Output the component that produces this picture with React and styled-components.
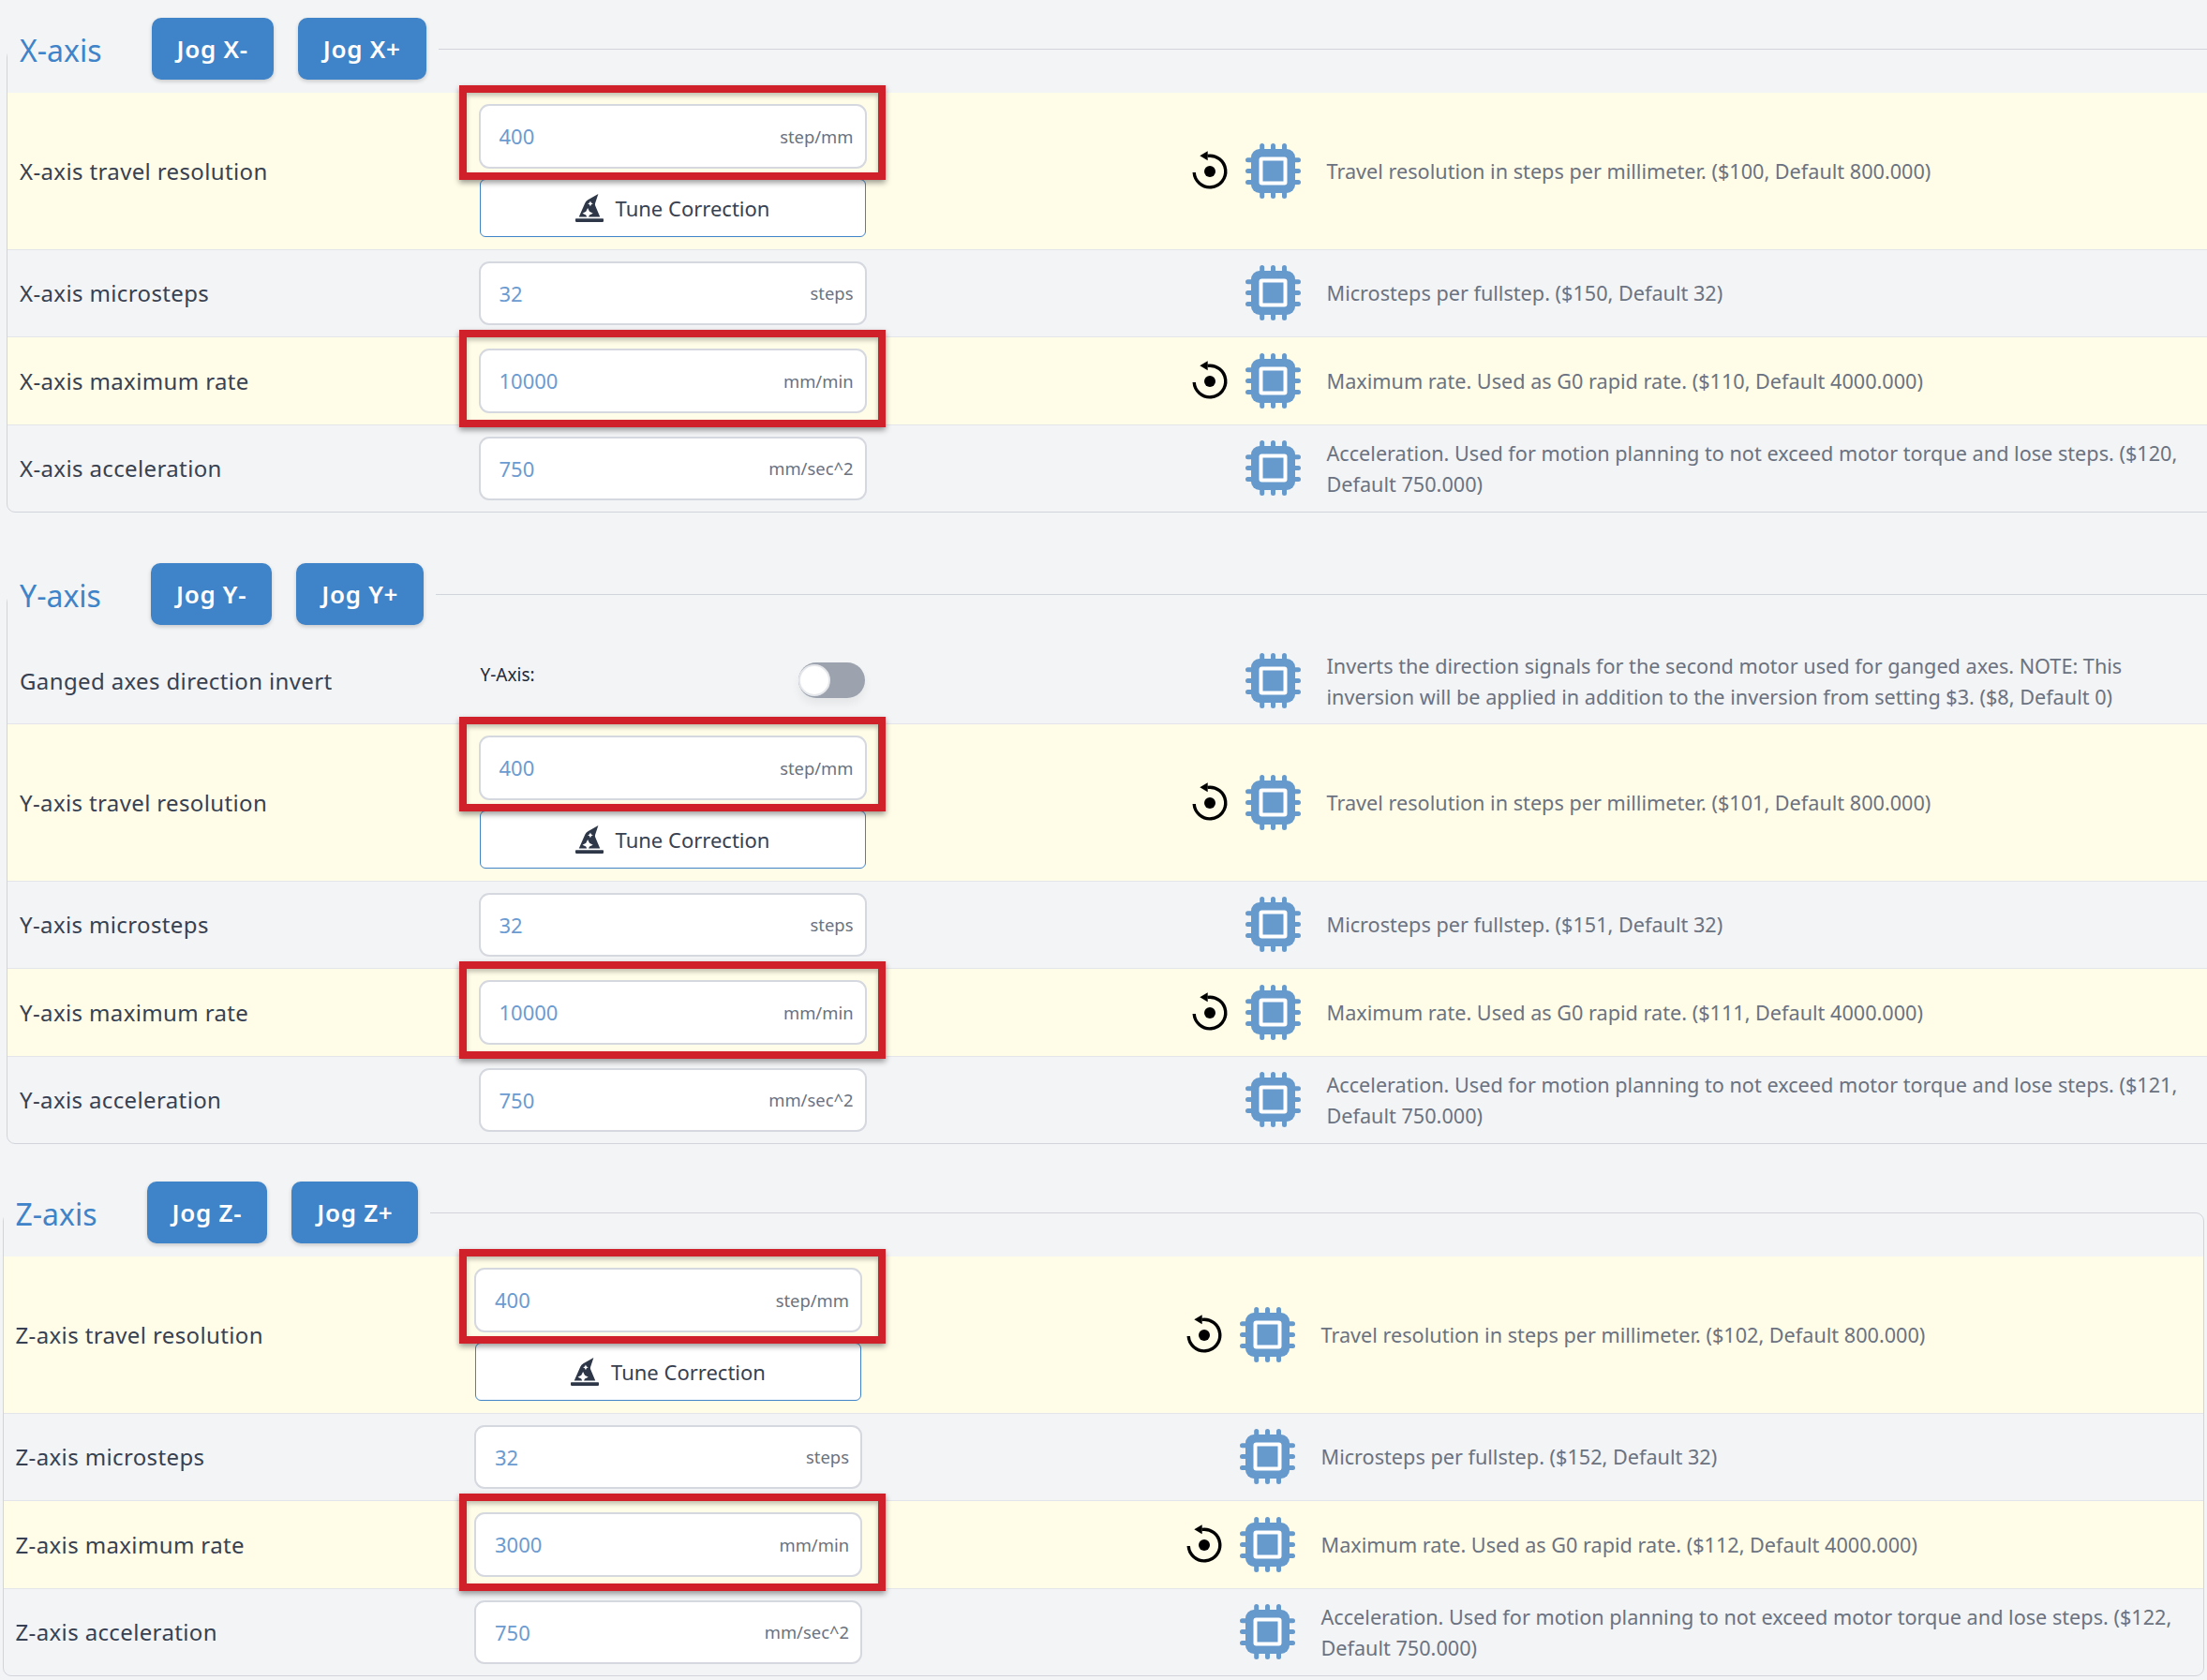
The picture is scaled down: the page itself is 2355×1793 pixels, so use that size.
import styled, { createGlobalStyle } from 'styled-components';
import { FaHatWizard } from 'react-icons/fa';

const GlobalStyle = createGlobalStyle`
  html, body {
    margin: 0;
    padding: 0;
    background: #f3f4f6;
  }
  body {
    font-family: "Noto Sans", "Open Sans", sans-serif;
    color: #374151;
  }
`;

const Page = styled.div`
  height: 1793px;
  padding-top: 19px;
  box-sizing: border-box;
  overflow: hidden;
`;

const Section = styled.fieldset`
  box-sizing: border-box;
  min-width: 0;
  padding: 0;
  border: 1.5px solid #d1d5db;
  border-radius: 9px;
  margin: 0 ${p => (p.$inset ? '3px' : '-20px')} ${p => p.$gap}px ${p => (p.$inset ? '2.5px' : '7px')};
`;

const Legend = styled.legend`
  display: flex;
  align-items: center;
  height: 66px;
  padding: 0 13px;
  margin: 0;
`;

const Title = styled.span`
  font-size: 32px;
  line-height: 70px;
  height: 66px;
  color: #3f83c8;
  margin-right: 53px;
`;

const JogButton = styled.button`
  height: 66px;
  padding: 0 27px;
  margin-right: 26px;
  border: 0;
  border-radius: 10px;
  background: #3f83c8;
  color: #fff;
  font: 600 26px "Noto Sans", sans-serif;
  letter-spacing: 0.7px;
  box-shadow: 0 2px 4px rgba(0, 0, 0, 0.18);
  &:last-child {
    margin-right: 0;
  }
`;

const Body = styled.div`
  padding-top: 14px;
`;

const Row = styled.div`
  display: grid;
  grid-template-columns: 502.5px 414px ${p => (p.$inset ? '489.5px' : '491px')} 934px;
  align-items: center;
  padding: ${p => (p.$compact ? '11.5px 0 11px' : '12px 0')};
  background: ${p => (p.$highlight ? '#fffde8' : 'transparent')};
  border-bottom: 1px solid #e3e5ea;
  &:last-child {
    border-bottom: 0;
  }
`;

const Label = styled.div`
  padding-left: 13px;
  font-size: 24px;
  letter-spacing: 0.37px;
`;

const Control = styled.div`
  position: relative;
  display: flex;
  flex-direction: column;
`;

const InputBox = styled.div`
  display: flex;
  align-items: center;
  justify-content: space-between;
  box-sizing: border-box;
  height: 68.5px;
  padding: 0 12px 0 20px;
  background: #fff;
  border: 2px solid #d5d8df;
  border-radius: 11px;
`;

const Value = styled.span`
  font-size: 22px;
  color: #6b9bd0;
`;

const Unit = styled.span`
  font-size: 18.4px;
  color: #6b7280;
`;

const Marker = styled.div`
  position: absolute;
  z-index: 2;
  top: -20px;
  bottom: ${p => p.$bottom}px;
  left: ${p => (p.$inset ? '-16px' : '-21px')};
  right: ${p => (p.$inset ? '-25px' : '-20px')};
  border: 8px solid #d0202a;
  box-shadow: 0 3px 6px rgba(0, 0, 0, 0.4), inset 0 3px 5px rgba(0, 0, 0, 0.25);
  pointer-events: none;
`;

const TuneButton = styled.button`
  display: flex;
  align-items: center;
  justify-content: center;
  gap: 13px;
  box-sizing: border-box;
  height: 62px;
  width: 412px;
  margin: 11px 0 1px 1px;
  background: #fff;
  border: 1.5px solid #3f83c8;
  border-radius: 6px;
  color: #374151;
  font: 400 22px "Noto Sans", sans-serif;
  svg {
    width: 30px;
    height: 30px;
    color: #2d3748;
  }
`;

const ToggleRow = styled.div`
  display: flex;
  align-items: flex-start;
  justify-content: space-between;
  height: 68.5px;
  padding-top: 14px;
  padding-left: 2px;
  box-sizing: border-box;
`;

const ToggleLabel = styled.span`
  font-size: 19px;
  line-height: 26px;
  color: #1f2937;
`;

const Track = styled.span`
  display: flex;
  align-items: center;
  width: 71px;
  height: 38px;
  margin-right: 2px;
  border-radius: 19px;
  background: #9ca3af;
  box-shadow: 0 6px 10px rgba(0, 0, 0, 0.06);
`;

const Knob = styled.span`
  width: 34px;
  height: 34px;
  border: 2px solid #e5e7eb;
  box-sizing: border-box;
  border-radius: 50%;
  background: #fff;
`;

const Actions = styled.div`
  display: flex;
  align-items: center;
  justify-content: flex-end;
  gap: 18px;
  padding-right: 28px;
`;

const Description = styled.div`
  font-size: 21.65px;
  line-height: 33px;
  color: #6b7280;
`;

const ResetIcon = () => (
  <svg width="40" height="42" viewBox="0 0 40 42">
    <path d="M17.5 5.4A16.8 16.8 0 1 1 3.2 23" fill="none" stroke="#000" strokeWidth="3.4" />
    <polygon points="9.3,5.3 17.7,0.3 17.7,10.3" fill="#000" />
    <circle cx="20" cy="22" r="6" fill="#000" />
  </svg>
);

const pins = [17.7, 29.5, 41.5];

const ChipIcon = () => (
  <svg width="59" height="59" viewBox="0 0 59 59">
    <g fill="#6699cc">
      {pins.map(p => (
        <g key={p}>
          <rect x={p - 2.5} y="0" width="5" height="59" rx="2.5" />
          <rect x="0" y={p - 2.5} width="59" height="5" rx="2.5" />
        </g>
      ))}
      <rect x="6" y="6" width="47" height="47" rx="9" />
    </g>
    <rect x="14.5" y="14.5" width="30" height="30" rx="3" fill="#fff" />
    <rect x="18.5" y="18.5" width="22" height="22" fill="#6699cc" />
  </svg>
);

const axisRows = (axis, n, rate) => [
  {
    label: `${axis}-axis travel resolution`, value: '400', unit: 'step/mm', tune: true, mark: 61.5, reset: true,
    text: `Travel resolution in steps per millimeter. ($10${n}, Default 800.000)`,
  },
  {
    label: `${axis}-axis microsteps`, value: '32', unit: 'steps',
    text: `Microsteps per fullstep. ($15${n}, Default 32)`,
  },
  {
    label: `${axis}-axis maximum rate`, value: rate, unit: 'mm/min', mark: -15, reset: true,
    text: `Maximum rate. Used as G0 rapid rate. ($11${n}, Default 4000.000)`,
  },
  {
    label: `${axis}-axis acceleration`, value: '750', unit: 'mm/sec^2',
    text: `Acceleration. Used for motion planning to not exceed motor torque and lose steps. ($12${n}, Default 750.000)`,
  },
];

const sections = [
  { axis: 'X', gap: 54, rows: axisRows('X', 0, '10000') },
  { axis: 'Y', gap: 40, ganged: true, rows: axisRows('Y', 1, '10000') },
  { axis: 'Z', gap: 0, inset: true, rows: axisRows('Z', 2, '3000') },
];

function SettingRow({ row, inset }) {
  return (
    <Row $highlight={row.mark !== undefined} $inset={inset}>
      <Label>{row.label}</Label>
      <Control>
        <InputBox>
          <Value>{row.value}</Value>
          <Unit>{row.unit}</Unit>
        </InputBox>
        {row.tune && (
          <TuneButton>
            <FaHatWizard />
            Tune Correction
          </TuneButton>
        )}
        {row.mark !== undefined && <Marker $bottom={row.mark} $inset={inset} />}
      </Control>
      <Actions>
        {row.reset && <ResetIcon />}
        <ChipIcon />
      </Actions>
      <Description>{row.text}</Description>
    </Row>
  );
}

export default function App() {
  return (
    <Page>
      <GlobalStyle />
      {sections.map(section => (
        <Section key={section.axis} $gap={section.gap} $inset={section.inset}>
          <Legend>
            <Title>{section.axis}-axis</Title>
            <JogButton>Jog {section.axis}-</JogButton>
            <JogButton>Jog {section.axis}+</JogButton>
          </Legend>
          <Body>
            {section.ganged && (
              <Row $compact>
                <Label>Ganged axes direction invert</Label>
                <ToggleRow>
                  <ToggleLabel>Y-Axis:</ToggleLabel>
                  <Track><Knob /></Track>
                </ToggleRow>
                <Actions><ChipIcon /></Actions>
                <Description>
                  Inverts the direction signals for the second motor used for ganged axes. NOTE: This inversion will be applied in addition to the inversion from setting $3. ($8, Default 0)
                </Description>
              </Row>
            )}
            {section.rows.map(row => (
              <SettingRow key={row.label} row={row} inset={section.inset} />
            ))}
          </Body>
        </Section>
      ))}
    </Page>
  );
}
